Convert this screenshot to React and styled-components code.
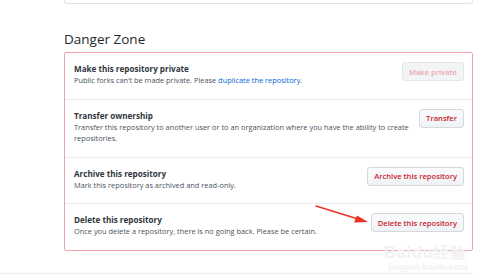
import React from "react";
import styled, { createGlobalStyle } from "styled-components";

const GlobalStyle = createGlobalStyle`
body{
margin:0;
background:#fff;
font-family:"Open Sans","Liberation Sans",sans-serif;
}
`;

const Page = styled.div`
position:relative;
width:500px;
height:280px;
overflow:hidden;
`;
const Column = styled.div`
width:409px;
margin-left:64px;
`;
const TopBox = styled.div`
height:3px;
border:1px solid #e1e4e8;
border-top:none;
border-radius:0 0 3px 3px;
`;
const Heading = styled.h2`
margin:22px 0 0;
font-size:13.5px;
font-weight:400;
line-height:26px;
color:#24292e;
`;
const DangerBox = styled.div`
border:1px solid #f0a3ab;
border-radius:2px;
`;
const Row = styled.div`
display:flex;
align-items:flex-start;
padding:9px 8px 12px 9px;
border-top:${p => (p.first ? "none" : "1px solid #eaecef")};
`;
const Info = styled.div`
flex:1;
padding-top:1px;
`;
const Title = styled.div`
font-size:8.1px;
font-weight:700;
line-height:12px;
color:#2f363d;
`;
const Desc = styled.div`
font-size:7.4px;
line-height:11.5px;
color:#4a535c;
`;
const Link = styled.a`
color:#0366d6;
text-decoration:none;
`;
const DangerButton = styled.button`
flex:none;
height:19px;
margin-left:5px;
padding:0 6px;
font-family:inherit;
font-size:7.6px;
font-weight:600;
color:${p => (p.disabled ? "#eaa9b0" : "#cb2431")};
background:${p => (p.disabled ? "#f3f4f6" : "linear-gradient(#fafbfc,#eff3f6)")};
border:1px solid ${p => (p.disabled ? "#e3e6ea" : "#d5d8dc")};
border-radius:3px;
`;
const BottomLine = styled.div`
width:473px;
height:1px;
margin-top:22px;
background:#eceef0;
`;
const Arrow = styled.svg`
position:absolute;
left:310px;
top:200px;
`;
const Watermark = styled.div`
position:absolute;
left:384px;
top:245px;
color:#f1f1f1;
font-family:"Liberation Sans",sans-serif;
text-align:right;
line-height:1;
pointer-events:none;
`;
const MarkBig = styled.div`
font-size:16px;
font-weight:700;
letter-spacing:1px;
`;
const MarkSmall = styled.div`
font-size:9px;
font-weight:700;
margin-top:2px;
`;

const ROWS = [
    { title: "Make this repository private", button: "Make private", disabled: true },
    { title: "Transfer ownership", desc: "Transfer this repository to another user or to an organization where you have the ability to create repositories.", button: "Transfer" },
    { title: "Archive this repository", desc: "Mark this repository as archived and read-only.", button: "Archive this repository" },
    { title: "Delete this repository", desc: "Once you delete a repository, there is no going back. Please be certain.", button: "Delete this repository" },
];

function DangerRow({ row, first }) {
    return (
        <Row first={first}>
            <Info>
                <Title>{row.title}</Title>
                <Desc>
                    {row.desc ? row.desc : <>Public forks can’t be made private. Please <Link href="#">duplicate the repository</Link>.</>}
                </Desc>
            </Info>
            <DangerButton disabled={row.disabled}>{row.button}</DangerButton>
        </Row>
    );
}

const App = () => {
    return (
        <Page>
            <GlobalStyle />
            <Column>
                <TopBox />
                <Heading>Danger Zone</Heading>
                <DangerBox>
                    {ROWS.map((r, i) => <DangerRow key={r.title} row={r} first={i === 0} />)}
                </DangerBox>
            </Column>
            <BottomLine />
            <Arrow width="62" height="26" viewBox="0 0 62 26">
                <path d="M6 6 L48 19" stroke="#ee2f24" strokeWidth="1.4" strokeLinecap="round" />
                <path d="M58 22 L44 22.5 L47 15.5 Z" fill="#ee2f24" />
            </Arrow>
            <Watermark>
                <MarkBig>Baidu经验</MarkBig>
                <MarkSmall>jingyan.baidu.com</MarkSmall>
            </Watermark>
        </Page>
    );
};
export default App;
